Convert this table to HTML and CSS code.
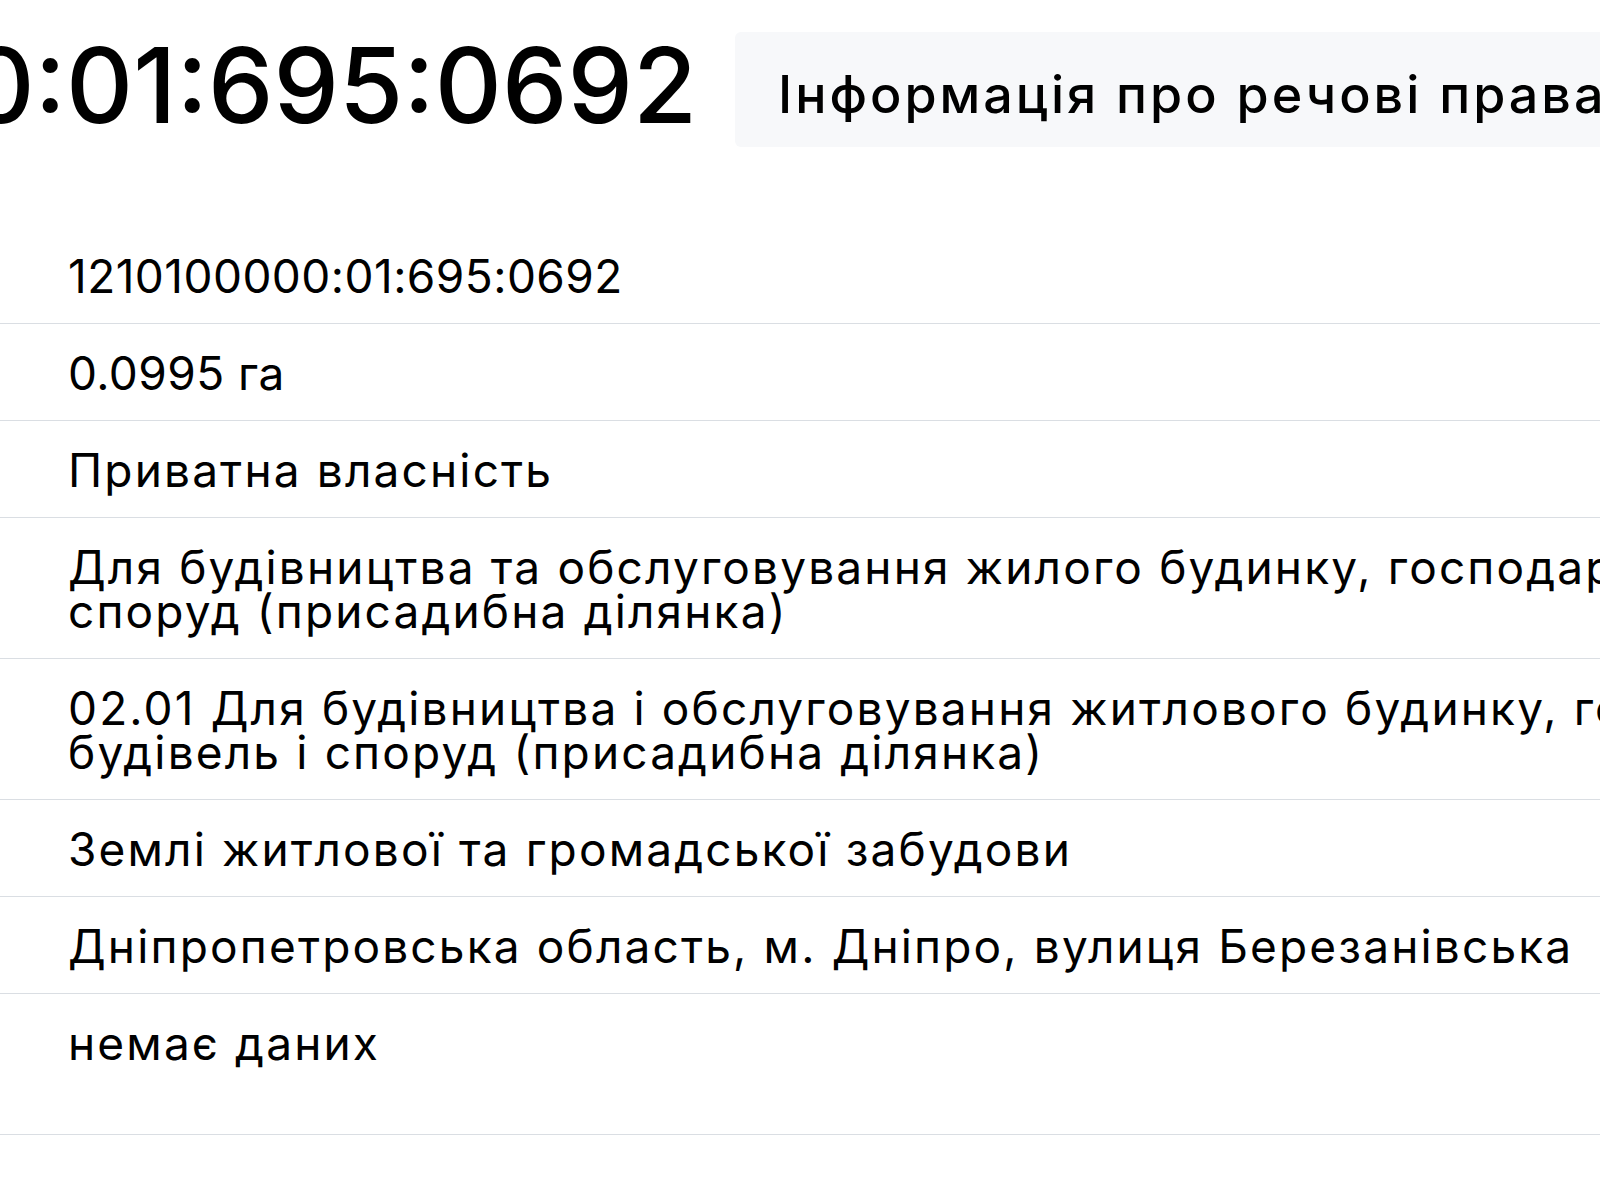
FILE: index.html
```html
<!DOCTYPE html>
<html lang="uk">
<head>
<meta charset="utf-8">
<title>1210100000:01:695:0692</title>
<link rel="stylesheet" href="styles.css">
</head>
<body>
<div class="page">
  <header class="header">
    <div class="title-wrap">
      <h1 class="title">1210100000:01:695:0692</h1>
    </div>
    <div class="tab-box">
      <span class="tab-label">Інформація про речові права</span>
    </div>
  </header>
  <section class="details">
    <div class="row row-num">1210100000:01:695:0692</div>
    <div class="row row-num">0.0995 га</div>
    <div class="row">Приватна власність</div>
    <div class="row">Для будівництва та обслуговування жилого будинку, господарських будівель і споруд (присадибна ділянка)</div>
    <div class="row">02.01 Для будівництва і обслуговування житлового будинку, господарських будівель і споруд (присадибна ділянка)</div>
    <div class="row">Землі житлової та громадської забудови</div>
    <div class="row">Дніпропетровська область, м. Дніпро, вулиця Березанівська</div>
    <div class="row row-last">немає даних</div>
  </section>
</div>
</body>
</html>
```

FILE: styles.css
```css
html, body {
  margin: 0;
  padding: 0;
  overflow: hidden;
  background: #ffffff;
}

body {
  width: 1600px;
  height: 1200px;
  color: #000000;
  font-family: "Inter", "Liberation Sans", sans-serif;
}

.page {
  width: 2080px;
}

.header {
  display: flex;
  align-items: flex-start;
  gap: 38px;
  padding-top: 32px;
}

.title-wrap {
  width: 697px;
  flex-shrink: 0;
  overflow: hidden;
  display: flex;
  justify-content: flex-end;
}

.title {
  margin: 1px 0 0 0;
  flex-shrink: 0;
  white-space: nowrap;
  font-weight: 500;
  font-size: 104px;
  line-height: 104px;
  letter-spacing: 0;
}

.tab-box {
  flex: 1;
  background: #f7f8fa;
  border-radius: 6px;
  padding: 36px 0 26px 43px;
  white-space: nowrap;
}

.tab-label {
  font-weight: 500;
  font-size: 52px;
  line-height: 53px;
  letter-spacing: 3px;
  display: block;
}

.details {
  margin-top: 80px;
}

.row {
  padding: 27px 0 25px 68px;
  border-bottom: 1px solid #dadee3;
  font-size: 46px;
  line-height: 44px;
  letter-spacing: 2.15px;
}

.row-num {
  letter-spacing: 0.45px;
}

.row-last {
  padding-bottom: 69px;
}
```
